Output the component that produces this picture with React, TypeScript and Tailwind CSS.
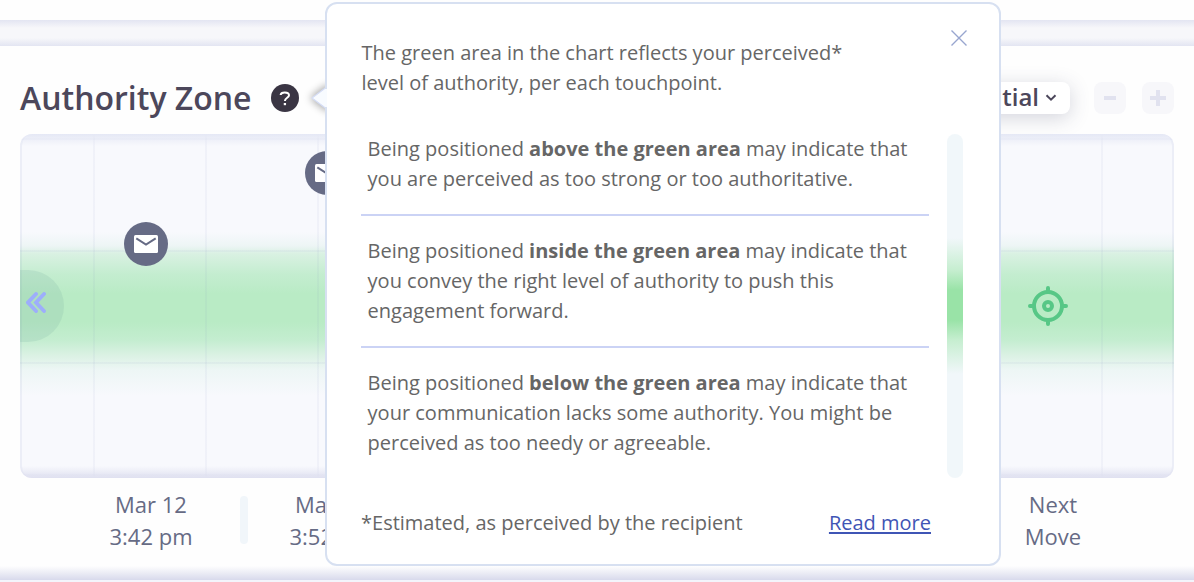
import React from "react";

const SECTIONS = [
  {
    zone: "above the green area",
    lines: ["may indicate that", "you are perceived as too strong or too authoritative."],
  },
  {
    zone: "inside the green area",
    lines: [
      "may indicate that",
      "you convey the right level of authority to push this",
      "engagement forward.",
    ],
  },
  {
    zone: "below the green area",
    lines: [
      "may indicate that",
      "your communication lacks some authority. You might be",
      "perceived as too needy or agreeable.",
    ],
  },
];

function MailPin({ className }: { className: string }) {
  return (
    <div
      className={`absolute flex h-11 w-11 items-center justify-center rounded-full bg-[#666b85] ${className}`}
    >
      <svg width="24" height="18" viewBox="0 0 24 18">
        <rect width="24" height="18" rx="1.5" fill="#fff" />
        <path d="M2.3 3.3 12 9.6l9.7-6.3" fill="none" stroke="#666b85" strokeWidth="2" />
      </svg>
    </div>
  );
}

function TargetIcon() {
  return (
    <svg
      className="absolute top-[152px] left-[1008px]"
      width="40"
      height="40"
      viewBox="0 0 40 40"
      fill="none"
      stroke="#57c786"
      strokeWidth="4"
      strokeLinecap="round"
    >
      <circle cx="20" cy="20" r="14" />
      <circle cx="20" cy="20" r="4" />
      <path d="M20 2v3M20 35v3M2 20h3M35 20h3" />
    </svg>
  );
}

function Header() {
  return (
    <header className="flex h-[88px] items-start px-5 pt-[30px]">
      <h1 className="w-[231px] text-[32px] leading-[44px] font-semibold whitespace-nowrap text-[#4c475b]">
        Authority Zone
      </h1>
      <div className="mt-2 ml-5 flex h-7 w-7 items-center justify-center rounded-full bg-[#3a3543]">
        <svg width="12" height="15" viewBox="0 0 12 15" fill="none" stroke="#fff" strokeWidth="2">
          <path d="M1.6 4C1.8 2.2 3.5 1.4 5.8 1.4c2.5 0 4.2 1 4.2 2.8 0 2.6-4.1 2.5-4.1 5.8" />
          <path d="M5.9 12v2.2" strokeWidth="2.3" />
        </svg>
      </div>
      <div className="mt-1.5 ml-auto flex items-start">
        <button className="flex h-8 items-center gap-1.5 rounded-lg bg-white pr-[13px] pl-4 text-[24px] font-semibold text-[#4c475b] shadow-[0_4px_20px_rgba(60,65,100,0.22)]">
          <span className="-mt-0.5 leading-[30px]">Potential</span>
          <svg width="12" height="8" viewBox="0 0 12 8" fill="none" stroke="#4c475b" strokeWidth="2">
            <path d="m1.5 1.2 4.5 4.5 4.5-4.5" />
          </svg>
        </button>
        <button className="ml-6 flex h-8 w-8 items-center justify-center rounded-lg bg-[#f7f7fa]">
          <span className="h-1 w-3 bg-[#e1e2ef]" />
        </button>
        <button className="ml-4 flex h-8 w-8 items-center justify-center rounded-lg bg-[#f7f7fa]">
          <svg width="16" height="16" viewBox="0 0 16 16" fill="none" stroke="#e1e2ef" strokeWidth="4">
            <path d="M8 0v16M0 8h16" />
          </svg>
        </button>
      </div>
    </header>
  );
}

function Chart() {
  return (
    <div className="relative mx-5 h-[344px] overflow-hidden rounded-xl bg-[#f8f9fd]">
      <div className="absolute inset-0 bg-[linear-gradient(180deg,transparent_98px,#edf5f5_112px,#d9f1e2_120px,#c4edd0_140px,#b9ebc5_160px,#b9ebc5_188px,#c4edd0_206px,#d9f1e2_220px,#edf6f5_236px,transparent_262px)]" />
      {/* grid */}
      <div className="absolute inset-y-0 right-0 left-[73px] bg-[repeating-linear-gradient(90deg,rgba(110,120,180,0.06)_0_2px,transparent_2px_112px)]" />
      <div className="absolute inset-x-0 top-1 bottom-0 bg-[repeating-linear-gradient(180deg,rgba(110,120,180,0.06)_0_2px,transparent_2px_112px)]" />
      <div className="absolute inset-0 rounded-xl border-x-2 border-[rgba(100,115,180,0.08)]" />
      <div className="absolute inset-x-0 top-0 h-3 bg-linear-to-b from-[#e5e8f5] to-transparent" />
      <div className="absolute inset-x-0 bottom-0 h-3 bg-linear-to-t from-[#dfe0f0] to-transparent" />
      <div className="absolute top-[136px] left-0 flex h-[72px] w-11 items-start rounded-r-[36px] bg-[rgba(130,180,170,0.22)] pt-[22px] pl-1.5">
        <svg width="20" height="21" viewBox="0 0 20 21" fill="none" stroke="#9daefb" strokeWidth="3.8" strokeLinecap="round">
          <path d="M10 2 2 10.5l8 8.5M18 2l-8 8.5 8 8.5" />
        </svg>
      </div>
      <MailPin className="top-[88px] left-[104px]" />
      <MailPin className="top-[17px] left-[285px]" />
      <TargetIcon />
    </div>
  );
}

function Timeline() {
  return (
    <div className="mt-2.5 flex h-16 items-start text-center text-[22px] leading-8 whitespace-nowrap text-[#666b85]">
      <div className="ml-[62px] w-[178px]">
        Mar 12
        <br />
        3:42 pm
      </div>
      <div className="mt-2 h-12 w-2 rounded-full bg-[#f1f6fa]" />
      <div className="ml-[-6px] w-[178px]">
        Mar 12
        <br />
        3:52 pm
      </div>
      <div className="mr-[61px] ml-auto w-40">
        Next
        <br />
        Move
      </div>
    </div>
  );
}

function Popover() {
  return (
    <div className="absolute top-0.5 left-[325px] h-[564px] w-[676px] rounded-xl border-2 border-[#d7e0f1] bg-white pt-[34px] pr-9 pl-[34px] text-[20px] leading-[30px] whitespace-nowrap text-[#666666]">
      <svg className="absolute top-[26px] left-[624px]" width="16" height="16" viewBox="0 0 16 16" stroke="#98a6cf" strokeWidth="1.4">
        <path d="m.5.5 15 15m0-15-15 15" />
      </svg>

      <p className="pl-[0.5px]">
        The green area in the chart reflects your perceived*
        <br />
        level of authority, per each touchpoint.
      </p>

      <div className="mt-9 flex h-[344px] justify-between">
        <div className="w-[568px] divide-y-2 divide-[#cbd3f5]">
          {SECTIONS.map(({ zone, lines }) => (
            <p key={zone} className="pb-5 pl-[6.6px] not-first:pt-5">
              Being positioned <b className="font-bold">{zone}</b>{" "}
              {lines.map((line, i) => (
                <React.Fragment key={line}>
                  {i > 0 && <br />}
                  {line}
                </React.Fragment>
              ))}
            </p>
          ))}
        </div>
        <div className="w-4 rounded-full bg-[linear-gradient(180deg,#f1f7fa_104px,#c6eed0_136px,#99e3a7_156px,#99e3a7_186px,#c6eed0_206px,#f1f7fa_240px)]" />
      </div>

      <div className="mt-[30px] flex justify-between pr-8">
        <span>*Estimated, as perceived by the recipient</span>
        <a href="#" className="text-[#3f55b5] underline decoration-2 underline-offset-2">
          Read more
        </a>
      </div>
    </div>
  );
}

export default function App() {
  return (
    <div className="relative h-[582px] overflow-hidden bg-[#fefefe] pt-5 font-['Open_Sans','Noto_Sans',sans-serif]">
      <div className="h-[26px] bg-[linear-gradient(180deg,#e3e5f2,#f7f7fa_8px,#f7f7fa_18px,#e3e5f2)]" />
      <Header />
      <Chart />
      <Timeline />
      <div className="absolute inset-x-0 bottom-0 h-4 border-b-2 border-[#f3f4fb] bg-linear-to-b from-transparent to-[#d8daec]" />
      {/* popover arrow */}
      <svg className="absolute top-[58px] left-[280px]" width="60" height="80" viewBox="0 0 60 80">
        <defs>
          <filter id="arrow-shadow" x="-100%" y="-100%" width="300%" height="300%">
            <feGaussianBlur stdDeviation="4.5" />
          </filter>
        </defs>
        <path d="M30 40 46 28h8v24h-8z" fill="#000" opacity=".38" filter="url(#arrow-shadow)" />
        <path d="M32 40 46 29.5v21z" fill="#f8fbff" stroke="#d5ddf5" strokeWidth="1.2" />
      </svg>
      <Popover />
      <div className="absolute top-[89px] left-[325px] h-[18px] w-0.5 bg-[#f8fbff]" />
    </div>
  );
}
